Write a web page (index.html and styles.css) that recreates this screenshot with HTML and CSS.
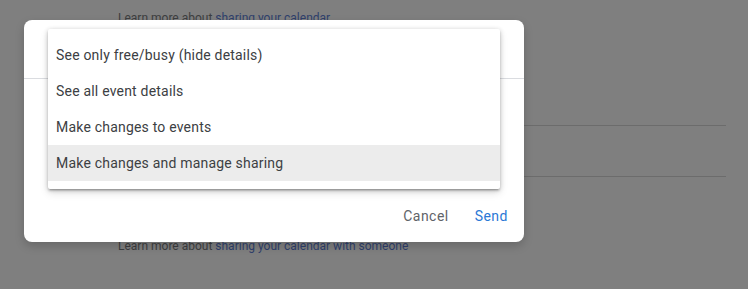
FILE: index.html
```html
<!DOCTYPE html>
<html>
<head>
<meta charset="utf-8">
<link rel="stylesheet" href="styles.css">
</head>
<body>
<div class="page">
  <p class="learn learn-top">Learn more about <span class="link">sharing your calendar</span></p>
  <div class="rule rule-a"></div>
  <div class="rule rule-b"></div>
  <p class="learn learn-bottom">Learn more about <span class="link">sharing your calendar with someone</span></p>
</div>

<div class="dialog">
  <div class="dialog-head"></div>
  <div class="dialog-body"></div>
  <div class="dialog-foot">
    <button class="btn btn-cancel">Cancel</button>
    <button class="btn btn-send">Send</button>
  </div>
  <ul class="menu">
    <li class="menu-item">See only free/busy (hide details)</li>
    <li class="menu-item">See all event details</li>
    <li class="menu-item">Make changes to events</li>
    <li class="menu-item is-active">Make changes and manage sharing</li>
  </ul>
</div>
</body>
</html>
```

FILE: styles.css
```css
html, body {
  margin: 0;
  padding: 0;
}
body {
  width: 748px;
  height: 289px;
  background: #7f7f7f;
  font-family: Roboto, "Liberation Sans", sans-serif;
  overflow: hidden;
  position: relative;
}
.page {
  padding: 9px 0 0 118px;
  display: flex;
  flex-direction: column;
}
.learn {
  margin: 0;
  font-size: 12px;
  line-height: 18px;
  color: #3d3e40;
  letter-spacing: 0;
}
.link {
  color: #2f3f6c;
}
.rule {
  height: 1px;
  background: #6c6c6c;
  width: 608px;
}
.rule-a { margin-top: 98px; }
.rule-b { margin-top: 50px; }
.learn-bottom { margin-top: 60px; }

.dialog {
  position: absolute;
  left: 24px;
  top: 20px;
  width: 500px;
  height: 222px;
  background: #fff;
  border-radius: 8px;
  box-shadow: 0 4px 10px rgba(0,0,0,0.18);
  display: flex;
  flex-direction: column;
}
.dialog-head {
  height: 58px;
  border-bottom: 1px solid #dadce0;
}
.dialog-body {
  flex: 1;
}
.dialog-foot {
  display: flex;
  justify-content: flex-end;
  gap: 10px;
  padding: 0 8px 8px 0;
}
.btn {
  border: 0;
  background: none;
  height: 36px;
  padding: 0 8px;
  font-family: Roboto, "Liberation Sans", sans-serif;
  font-size: 14px;
  font-weight: 400;
  letter-spacing: 0.45px;
  cursor: pointer;
}
.btn-cancel { color: #5f6368; }
.btn-send { color: #2a78d6; letter-spacing: 0.5px; }

.menu {
  position: absolute;
  left: 24px;
  top: 9px;
  width: 452px;
  margin: 0;
  padding: 8px 0;
  list-style: none;
  background: #fff;
  border-radius: 2px;
  box-shadow: 0 2px 2px rgba(0,0,0,0.14), 0 3px 1px -2px rgba(0,0,0,0.12), 0 1px 5px rgba(0,0,0,0.2), 0 4px 8px rgba(0,0,0,0.12);
}
.menu-item {
  height: 36px;
  display: flex;
  align-items: center;
  padding-left: 8px;
  font-size: 14px;
  color: #3c4043;
  letter-spacing: 0.2px;
}
.menu-item.is-active {
  background: #ececec;
}
```
